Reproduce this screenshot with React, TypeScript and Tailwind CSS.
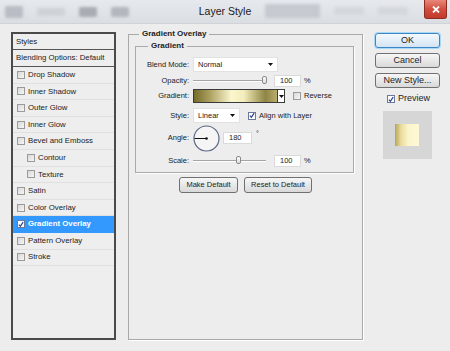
import React from "react";

const effects = [
  { label: "Drop Shadow" },
  { label: "Inner Shadow" },
  { label: "Outer Glow" },
  { label: "Inner Glow" },
  { label: "Bevel and Emboss" },
  { label: "Contour", indent: true },
  { label: "Texture", indent: true },
  { label: "Satin" },
  { label: "Color Overlay" },
  { label: "Gradient Overlay", active: true },
  { label: "Pattern Overlay" },
  { label: "Stroke" },
];

function Check({ checked = false }: { checked?: boolean }) {
  return (
    <span
      className={`flex w-[8px] h-[8px] shrink-0 items-center justify-center border ${
        checked ? "border-[#6b7a99] bg-white" : "border-[#9a9a9a] bg-gradient-to-br from-[#d8d8d8] to-[#f6f6f6]"
      }`}
    >
      {checked && (
        <svg width="7" height="7" viewBox="0 0 7 7">
          <path d="M1 3.6 L2.8 5.6 L6 0.8" fill="none" stroke="#2b3f8f" strokeWidth="1.4" />
        </svg>
      )}
    </span>
  );
}

function Arrow() {
  return (
    <svg width="5" height="3" viewBox="0 0 5 3">
      <path d="M0 0 H5 L2.5 3 Z" fill="#111" />
    </svg>
  );
}

function Slider({ pos }: { pos: number }) {
  return (
    <div className="relative ml-[4px] w-[73px] h-[13px] flex items-center">
      <div className="w-full h-[2px] border-t border-[#a5a5a5] border-b border-b-white" />
      <div
        className="absolute top-[2px] w-[5px] h-[8px] rounded-[2px] border border-[#8a8a8a] bg-gradient-to-b from-white to-[#dcdcdc]"
        style={{ left: pos }}
      />
    </div>
  );
}

function NumBox({ value, w = 27 }: { value: string; w?: number }) {
  return (
    <div
      className="h-[12px] bg-white border border-[#dadada] flex items-center pl-[5px] text-[7.5px] text-[#222]"
      style={{ width: w }}
    >
      {value}
    </div>
  );
}

function Btn({ label, w }: { label: string; w: number }) {
  return (
    <div
      className="h-[16px] flex items-center justify-center rounded-[3px] border border-[#707070] bg-gradient-to-b from-[#f7f7f7] to-[#d9d9d9] text-[7.5px] text-[#222]"
      style={{ width: w }}
    >
      {label}
    </div>
  );
}

export default function App() {
  return (
    <div className="w-[450px] h-[351px] overflow-hidden bg-[#ededed] font-['Liberation_Sans',Arial,sans-serif] text-[#222]">
      {/* Title bar */}
      <div className="h-[24px] flex items-start bg-gradient-to-b from-[#e6e9ed] to-[#dadee3] border-b border-[#d0d4d9]">
        <div className="flex items-center gap-[14px] pl-[5px] pt-[6px] w-[185px] blur-[1.5px]">
          <div className="w-[18px] h-[12px] bg-[#b9bdc3] rounded-[2px]" />
          <div className="w-[28px] h-[8px] bg-[#cfd3d8] rounded-[2px]" />
          <div className="w-[18px] h-[10px] bg-[#a9adb3] rounded-[2px]" />
          <div className="w-[18px] h-[10px] bg-[#b3b7bd] rounded-[2px]" />
        </div>
        <div className="w-[80px] pt-[4px] text-center text-[10.5px] text-[#1a1a1a]">Layer Style</div>
        <div className="flex items-center gap-[14px] pt-[4px] blur-[1.5px]">
          <div className="w-[55px] h-[14px] bg-[#c6cad0] rounded-[2px]" />
          <div className="w-[30px] h-[8px] bg-[#d4d8dd] rounded-[2px]" />
          <div className="w-[30px] h-[8px] bg-[#d4d8dd] rounded-[2px]" />
        </div>
        <div className="ml-auto mr-[3px] w-[23px] h-[19px] flex items-center justify-center rounded-b-[3px] border border-t-0 border-[#8e2b22] bg-gradient-to-b from-[#e8877a] via-[#d24e3f] to-[#c23a2b]">
          <svg width="8" height="7" viewBox="0 0 8 7">
            <path d="M1 0.5 L7 6.5 M7 0.5 L1 6.5" stroke="white" strokeWidth="1.8" />
          </svg>
        </div>
      </div>

      {/* Body */}
      <div className="flex items-start pl-[11px]">
        {/* Styles list */}
        <div className="mt-[8px] w-[105px] h-[308px] border-2 border-[#4a4a4a] bg-[#eeeeee] text-[7.8px]">
          <div className="h-[16px] flex items-center pl-[3px] border-b border-[#555]">Styles</div>
          <div className="h-[17px] flex items-center pl-[3px] border-b border-[#555]">Blending Options: Default</div>
          {effects.map((e) => (
            <div
              key={e.label}
              className={`h-[16.6px] flex items-center gap-[3px] border-b ${
                e.active ? "bg-[#3399ff] text-white font-bold border-[#3399ff]" : "border-[#e0e0e0]"
              } ${e.indent ? "pl-[14px]" : "pl-[4px]"}`}
            >
              <Check checked={e.active} />
              <span>{e.label}</span>
            </div>
          ))}
        </div>

        {/* Gradient Overlay group */}
        <fieldset className="ml-[12px] mt-[5px] w-[235px] h-[311px] border border-[#a9a9a9] shadow-[1px_1px_0_white]">
          <legend className="ml-[10px] px-[3px] text-[8px] leading-[10px] font-bold">Gradient Overlay</legend>

          <fieldset className="ml-[6px] mt-[2px] w-[219px] h-[132px] border border-[#a9a9a9] shadow-[1px_1px_0_white] text-[7.5px]">
            <legend className="ml-[12px] px-[3px] text-[8px] leading-[10px] font-bold">Gradient</legend>

            {/* Blend Mode */}
            <div className="mt-[6px] h-[15px] flex items-center">
              <span className="w-[53px] text-right">Blend Mode:</span>
              <div className="ml-[4px] w-[85px] h-[15px] bg-white border border-[#e2e2e2] flex items-center justify-between pl-[4px] pr-[4px]">
                <span>Normal</span>
                <Arrow />
              </div>
            </div>

            {/* Opacity */}
            <div className="mt-[2px] h-[13px] flex items-center">
              <span className="w-[53px] text-right">Opacity:</span>
              <Slider pos={69} />
              <div className="ml-[8px]">
                <NumBox value="100" />
              </div>
              <span className="ml-[3px]">%</span>
            </div>

            {/* Gradient */}
            <div className="mt-[2px] h-[14px] flex items-center">
              <span className="w-[53px] text-right">Gradient:</span>
              <div className="ml-[4px] w-[85px] h-[14px] border border-[#3a3a3a] bg-[linear-gradient(90deg,#756b2c_0%,#a99d5a_18%,#fbf6cf_45%,#f3ecbb_60%,#8f8443_86%,#b8ad6e_100%)]" />
              <div className="w-[7px] h-[14px] bg-white border border-l-0 border-[#3a3a3a] flex items-center justify-center">
                <Arrow />
              </div>
              <span className="ml-[8px]">
                <Check />
              </span>
              <span className="ml-[3px]">Reverse</span>
            </div>

            {/* Style */}
            <div className="mt-[5px] h-[15px] flex items-center">
              <span className="w-[53px] text-right">Style:</span>
              <div className="ml-[4px] w-[47px] h-[15px] bg-white border border-[#e2e2e2] flex items-center justify-between pl-[4px] pr-[4px]">
                <span>Linear</span>
                <Arrow />
              </div>
              <span className="ml-[8px]">
                <Check checked />
              </span>
              <span className="ml-[3px]">Align with Layer</span>
            </div>

            {/* Angle */}
            <div className="mt-[2px] h-[26px] flex items-center">
              <span className="w-[53px] text-right">Angle:</span>
              <svg className="ml-[4px]" width="27" height="27" viewBox="0 0 27 27">
                <circle cx="13.5" cy="13.5" r="12.5" fill="#f5f5f5" stroke="#5b6685" strokeWidth="1.2" />
                <line x1="1.5" y1="13.5" x2="13.5" y2="13.5" stroke="#111" strokeWidth="1" />
                <circle cx="13.5" cy="13.5" r="1.3" fill="#111" />
              </svg>
              <div className="ml-[3px]">
                <NumBox value="180" w={29} />
              </div>
              <span className="ml-[4px] self-start mt-[4px] text-[7px]">°</span>
            </div>

            {/* Scale */}
            <div className="mt-[3px] h-[13px] flex items-center">
              <span className="w-[53px] text-right">Scale:</span>
              <Slider pos={43} />
              <div className="ml-[8px]">
                <NumBox value="100" />
              </div>
              <span className="ml-[3px]">%</span>
            </div>
          </fieldset>

          <div className="mt-[4px] flex justify-center gap-[6px]">
            <Btn label="Make Default" w={59} />
            <Btn label="Reset to Default" w={68} />
          </div>
        </fieldset>

        {/* Right column */}
        <div className="ml-[12px] mt-[9px] w-[65px] flex flex-col text-[9px]">
          <div className="h-[15px] flex items-center justify-center rounded-[3px] border border-[#3d86c6] shadow-[0_0_0_1px_#a8d8f5] bg-gradient-to-b from-[#f4f9fd] to-[#d3e4f2]">
            OK
          </div>
          <div className="mt-[5px] h-[15px] flex items-center justify-center rounded-[3px] border border-[#707070] bg-gradient-to-b from-[#f7f7f7] to-[#d9d9d9]">
            Cancel
          </div>
          <div className="mt-[5px] h-[15px] flex items-center justify-center rounded-[3px] border border-[#707070] bg-gradient-to-b from-[#f7f7f7] to-[#d9d9d9]">
            New Style...
          </div>
          <div className="mt-[6px] h-[10px] flex items-center gap-[3px] pl-[12px]">
            <Check checked />
            <span>Preview</span>
          </div>
          <div className="mt-[7px] ml-[8px] w-[49px] h-[48px] bg-[#d6d6d6] pt-[13px] pl-[12px]">
            <div className="w-[24px] h-[22px] bg-[linear-gradient(90deg,#b5a55a_0%,#e9dc9c_25%,#fcf5cb_55%,#fdf8d6_100%)]" />
          </div>
        </div>
      </div>
    </div>
  );
}
